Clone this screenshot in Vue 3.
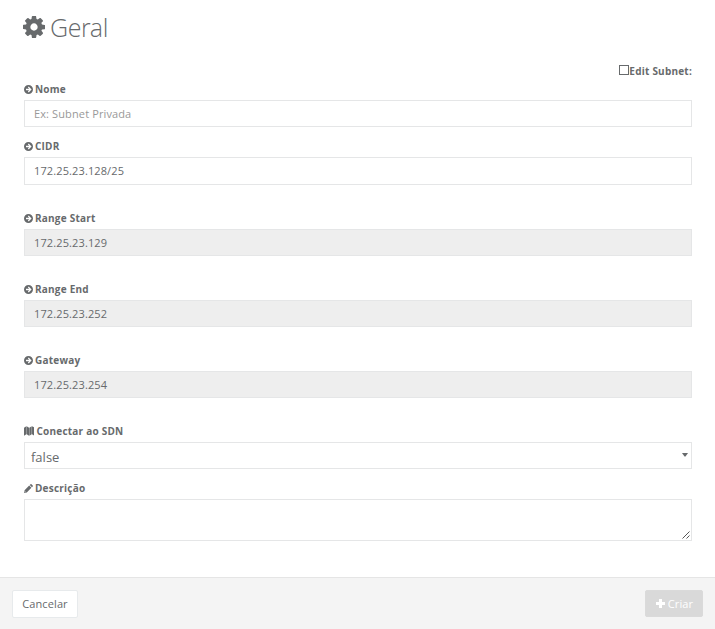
<script setup>
import { ref, reactive } from 'vue'

const editSubnet = ref(false)
const fields = reactive([
  { id: 'nome', label: 'Nome', value: '', placeholder: 'Ex: Subnet Privada' },
  { id: 'cidr', label: 'CIDR', value: '172.25.23.128/25', tall: true },
  { id: 'start', label: 'Range Start', value: '172.25.23.129', locked: true },
  { id: 'end', label: 'Range End', value: '172.25.23.252', locked: true },
  { id: 'gateway', label: 'Gateway', value: '172.25.23.254', locked: true },
])
const sdn = ref('false')
const description = ref('')
</script>

<template>
  <div class="page">
    <main class="content">
      <h1 class="title">
        <svg class="cog" viewBox="0 128 1536 1536"><path d="M1024 896q0-106-75-181t-181-75-181 75-75 181 75 181 181 75 181-75 75-181zm512-109v222q0 12-8 23t-20 13l-185 28q-19 54-39 91 35 50 107 138 10 12 10 25t-9 23q-27 37-99 108t-94 71q-12 0-26-9l-138-108q-44 23-91 38-16 136-29 186-7 28-36 28h-222q-14 0-24.5-8.5t-11.5-21.5l-28-184q-49-16-90-37l-141 107q-10 9-25 9-14 0-25-11-126-114-165-168-7-10-7-23 0-12 8-23 15-21 51-66.5t54-70.5q-27-50-41-99l-183-27q-13-2-21-12.5t-8-23.5v-222q0-12 8-23t19-13l186-28q14-46 39-92-40-57-107-138-10-12-10-24 0-10 9-23 26-36 98.5-107.5t94.5-71.5q13 0 26 10l138 107q44-23 91-38 16-136 29-186 7-28 36-28h222q14 0 24.5 8.5t11.5 21.5l28 184q49 16 90 37l142-107q9-9 24-9 13 0 25 10 129 119 165 170 7 8 7 22 0 12-8 23-15 21-51 66.5t-54 70.5q26 50 41 98l183 28q13 2 21 12.5t8 23.5z" /></svg>
        <span>Geral</span>
      </h1>

      <label class="edit">
        <input v-model="editSubnet" class="check" type="checkbox" />
        <span>Edit Subnet:</span>
      </label>

      <div v-for="f in fields" :key="f.id" class="field" :class="{ spaced: f.tall || f.locked }">
        <label class="label" :for="f.id">
          <svg class="arrow" viewBox="0 0 18 18">
            <path fill-rule="evenodd" d="M9 0a9 9 0 1 1 0 18A9 9 0 0 1 9 0zM15.2 9 9.4 3.2 7.7 4.9 10.4 7.7H4v2.6h6.4l-2.7 2.8 1.7 1.7z" />
          </svg>
          <span>{{ f.label }}</span>
        </label>
        <input
          :id="f.id"
          v-model="f.value"
          class="box"
          :class="{ tall: f.tall }"
          type="text"
          :placeholder="f.placeholder"
          :disabled="f.locked"
        />
      </div>

      <div class="field">
        <label class="label" for="sdn">
          <svg class="map" viewBox="0 0 22 20">
            <path d="M0 3 5 0v17l-5 3zM5.600 0l5 3v17l-5-3zM11.200 3l5-3v17l-5 3zM16.800 0l5.200 3v17l-5.200-3z" />
          </svg>
          <span>Conectar ao SDN</span>
        </label>
        <div class="select">
          <select id="sdn" v-model="sdn" class="box choice">
            <option>false</option>
            <option>true</option>
          </select>
          <svg class="caret" viewBox="0 0 6 4"><path d="M0 0h6L3.500 3.500h-1z" /></svg>
        </div>
      </div>

      <div class="field">
        <label class="label" for="desc">
          <svg class="pencil" viewBox="0 0 18 18">
            <path fill-rule="evenodd" d="M0 18l1.200-5.600L10.400 3.200l4.400 4.400-9.200 9.200zM1.900 14.500l-.4 2 2-.4zM11.500 2.100 13 .6q1-1 2 0L17.400 3q1 1 0 2l-1.500 1.500z" />
          </svg>
          <span>Descrição</span>
        </label>
        <div class="area">
          <textarea id="desc" v-model="description" class="box"></textarea>
          <svg class="grip" viewBox="0 0 8 8"><path d="M.5 7.500l7-7M4.500 7.500l3-3" /></svg>
        </div>
      </div>
    </main>

    <footer class="footer">
      <button class="btn cancel" type="button">Cancelar</button>
      <button class="btn create" type="button" disabled>
        <svg class="plus" viewBox="0 0 9 9"><path d="M3 0h3v3h3v3H6v3H3V6H0V3h3z" /></svg>
        <span>Criar</span>
      </button>
    </footer>
  </div>
</template>

<style>
body {
  margin: 0;
  background: #fff;
}
</style>

<style scoped>
.page {
  box-sizing: border-box;
  height: 629px;
  display: flex;
  flex-direction: column;
  overflow: hidden;
  font-family: "Open Sans", "Noto Sans", sans-serif;
  font-size: 11px;
  color: #676a6c;
}
.page * {
  box-sizing: border-box;
}
svg {
  display: block;
  flex: none;
  fill: currentColor;
}
.content {
  flex: 1;
  padding: 10px 23px 0 24px;
}
.title {
  display: flex;
  align-items: center;
  gap: 5px;
  height: 34px;
  margin: 0 0 0 -1px;
  font-family: "Open Sans Light", "Open Sans", sans-serif;
  font-size: 25px;
  font-weight: 300;
  letter-spacing: -0.4px;
}
.title span {
  padding-bottom: 1px;
}
.cog {
  width: 22px;
  height: 22px;
}
.edit {
  display: flex;
  justify-content: flex-end;
  align-items: center;
  height: 15px;
  margin: 19px 0 0;
  font-size: 10px;
  font-weight: 700;
  letter-spacing: 0.22px;
}
.check {
  appearance: none;
  width: 10px;
  height: 10px;
  margin: 0 0 1px;
  border: 1px solid #676a6c;
  background: #fff;
}
.field {
  margin-bottom: 9px;
}
.field.spaced {
  margin-bottom: 23px;
}
.label {
  display: flex;
  align-items: center;
  height: 21px;
  margin-left: -0.5px;
  gap: 2.5px;
  font-size: 10px;
  font-weight: 700;
  letter-spacing: 0.22px;
}
.edit + .field {
  margin-top: 1px;
}
.label span {
  padding-bottom: 2px;
}
.arrow {
  width: 9px;
  height: 9px;
  margin-bottom: 1px;
}
.map {
  width: 10.500px;
  height: 10px;
  margin-bottom: 1px;
}
.pencil {
  width: 9px;
  height: 9px;
}
.box {
  display: block;
  width: 100%;
  height: 27px;
  margin: 0;
  padding: 0 9px;
  border: 1px solid #e5e6e7;
  border-radius: 0;
  outline: 0;
  background: #fff;
  color: #676a6c;
  font: inherit;
  letter-spacing: 0.12px;
}
.box.tall {
  height: 28px;
  padding-bottom: 1px;
}
.box::placeholder {
  color: #999;
  opacity: 1;
}
.box:disabled {
  background: #eee;
}
.select,
.area {
  position: relative;
}
.choice {
  appearance: none;
  padding: 2px 6px 0;
  font-size: 13px;
  letter-spacing: 0;
}
.caret {
  position: absolute;
  right: 4px;
  top: 11px;
  width: 6px;
  height: 4px;
}
textarea.box {
  height: 42px;
  resize: none;
}
.grip {
  position: absolute;
  right: 2px;
  bottom: 2px;
  width: 8px;
  height: 8px;
  fill: none;
  stroke: #444;
  stroke-width: 0.9;
}
.footer {
  display: flex;
  justify-content: space-between;
  align-items: flex-start;
  height: 52px;
  padding: 12px 12px 0;
  border-top: 1px solid #e5e5e5;
  background: #f4f4f4;
}
.btn {
  display: flex;
  align-items: center;
  justify-content: center;
  gap: 3px;
  height: 28px;
  padding: 0;
  border: 1px solid #e7eaec;
  border-radius: 2px;
  font: inherit;
  letter-spacing: 0.1px;
}
.cancel {
  width: 66px;
  padding-bottom: 1px;
  background: #fff;
  color: #676a6c;
}
.create {
  width: 58px;
  height: 27px;
  padding-left: 1px;
  border-color: #dadada;
  background: #d9d9d9;
  color: #fff;
}
.plus {
  width: 9px;
  height: 9px;
}
</style>
